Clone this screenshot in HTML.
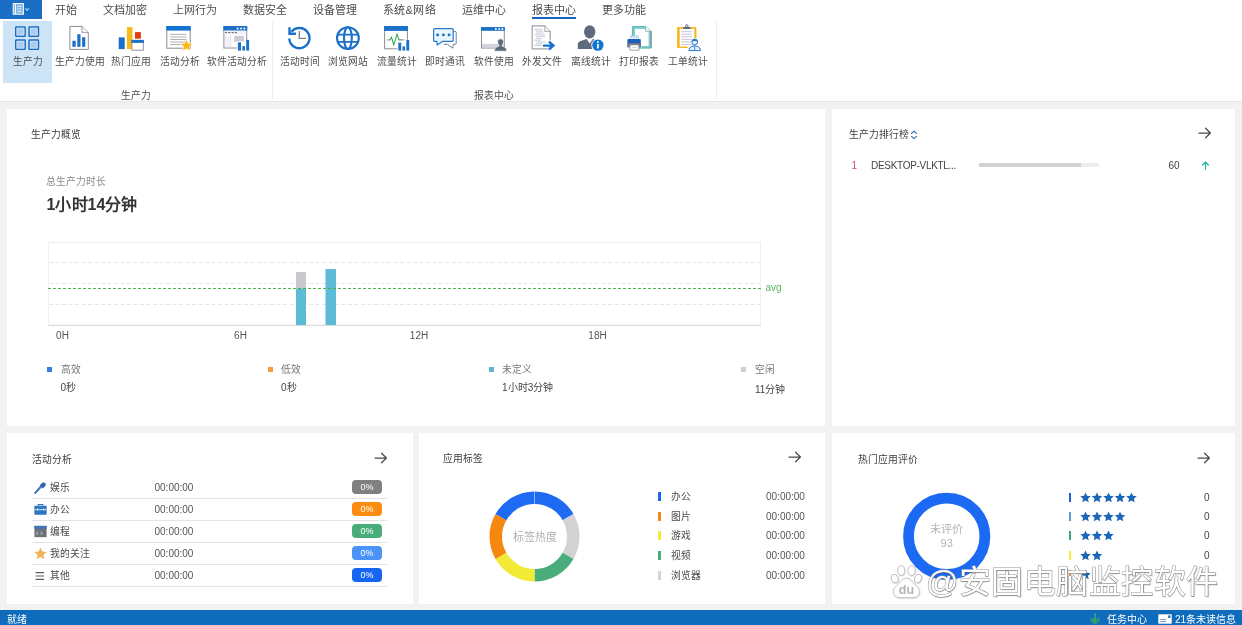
<!DOCTYPE html>
<html lang="zh-CN">
<head>
<meta charset="utf-8">
<title>生产力</title>
<style>
*{box-sizing:border-box;margin:0;padding:0}
html,body{width:1242px;height:625px;overflow:hidden;background:#f2f2f2}
body{position:relative;font-family:"Liberation Sans",sans-serif;font-size:10px;color:#444;line-height:1}
.abs,.abs *{position:absolute}
div,span,svg{position:absolute;white-space:nowrap}
.c{transform:translateX(-50%)}
#app{left:0;top:0;width:1242px;height:625px;background:#f2f2f2;overflow:hidden;will-change:transform}
/* ribbon */
#ribbon{left:0;top:0;width:1242px;height:102px;background:#fff;border-bottom:1px solid #e6e6e6}
#appbtn{left:0;top:0;width:42px;height:19px;background:#1a6fc4}
.menu{top:3.5px;font-size:11px;line-height:12px;color:#4d4d4d;height:12px}
#tabline{left:532px;top:17px;width:44px;height:2px;background:#1565c0}
#sel{left:3px;top:21px;width:49px;height:62px;background:#cde4f6}
.rl{top:56px;font-size:9.75px;line-height:11px;height:11px;color:#4d4d4d;text-align:center;transform:translateX(-50%)}
.gl{top:90px;font-size:9.75px;line-height:11px;height:11px;color:#4d4d4d;transform:translateX(-50%)}
.vsep{top:22px;width:1px;height:77px;background:#ededed}
.ico{top:25px;width:28px;height:28px}
/* panels */
.panel{background:#fff}
.pt{font-size:9.75px;line-height:11px;height:11px;color:#3c3c3c}
.xl{top:330px;font-size:10px;line-height:11px;color:#555}
.sq{width:5px;height:5px}
.lg{top:364px;font-size:9.75px;line-height:11px;color:#777}
.lv{top:382px;font-size:10px;line-height:11px;color:#444}
.an{font-size:9.75px;line-height:11px;color:#4a4a4a}
.at{font-size:10px;line-height:11px;color:#555}
.bd{left:352px;margin-top:-.5px;width:30px;height:14px;border-radius:4px;color:#fff;font-size:9px;line-height:14px;text-align:center}
.hl{left:32px;width:355px;height:1px;background:#e4e4e4}
.tb{left:657.5px;width:3px;height:9px}
.rb{left:1068.7px;width:2.6px;height:9px}
#wm{font-size:32px;line-height:40px;height:40px;letter-spacing:.5px;color:#fff;-webkit-text-stroke:1.1px #9c9c9c;paint-order:stroke fill;text-shadow:.5px .8px 1.2px rgba(0,0,0,.28)}
.j{text-align:justify;text-align-last:justify}
/* status */
#status{left:0;top:610px;width:1242px;height:15px;background:#0f6cbd}
.st{top:4px;font-size:10px;line-height:11px;height:11px;color:#fff}
</style>
</head>
<body>
<div id="app">

<!-- ================= RIBBON ================= -->
<div id="ribbon">
  <div id="appbtn"></div>
  <span class="j menu" style="width:22px;left:55px">开始</span>
  <span class="j menu" style="width:44px;left:103px">文档加密</span>
  <span class="j menu" style="width:44px;left:173px">上网行为</span>
  <span class="j menu" style="width:44px;left:243px">数据安全</span>
  <span class="j menu" style="width:44px;left:313px">设备管理</span>
  <span class="j menu" style="left:382.5px;width:53.5px">系统&amp;网络</span>
  <span class="j menu" style="width:44px;left:462px">运维中心</span>
  <span class="j menu" style="width:44px;left:532px">报表中心</span>
  <span class="j menu" style="width:44px;left:602px">更多功能</span>
  <div id="tabline"></div>
  <div id="sel"></div>

<svg id="icons" style="left:0;top:0" width="730" height="56" viewBox="0 0 730 56">
<g id="i-app"><rect x="13.2" y="3.6" width="10.2" height="10.6" fill="#7db4e6" stroke="#fff" stroke-width="1"/><path d="M15.4 3.6 V14.2" stroke="#fff" stroke-width="1"/><path d="M17.3 6.4 H21.6 M17.3 8.9 H21.6 M17.3 11.4 H21.6" stroke="#fff" stroke-width=".8" opacity=".9"/><path d="M25.2 8.4 L27 10.3 L28.8 8.4" fill="none" stroke="#9ad2ff" stroke-width="1.3"/></g>
<g id="i1"><rect x="15.75" y="26.95" width="9.4" height="9.3" rx=".6" fill="#a9ccf1" stroke="#1b6cc0" stroke-width="1.5"/><rect x="17.0" y="28.2" width="6.9" height="6.8" fill="none" stroke="#cfe4fb" stroke-width=".8"/><rect x="29.049999999999997" y="26.95" width="9.4" height="9.3" rx=".6" fill="#a9ccf1" stroke="#1b6cc0" stroke-width="1.5"/><rect x="30.299999999999997" y="28.2" width="6.9" height="6.8" fill="none" stroke="#cfe4fb" stroke-width=".8"/><rect x="15.75" y="40.05" width="9.4" height="9.3" rx=".6" fill="#a9ccf1" stroke="#1b6cc0" stroke-width="1.5"/><rect x="17.0" y="41.3" width="6.9" height="6.8" fill="none" stroke="#cfe4fb" stroke-width=".8"/><rect x="29.049999999999997" y="40.05" width="9.4" height="9.3" rx=".6" fill="#a9ccf1" stroke="#1b6cc0" stroke-width="1.5"/><rect x="30.299999999999997" y="41.3" width="6.9" height="6.8" fill="none" stroke="#cfe4fb" stroke-width=".8"/></g>
<g id="i2"><path d="M69.9 26.4 H81.9 L88.3 32.6 V49.4 H69.9 Z" fill="#fff" stroke="#8d8d93" stroke-width="1"/><path d="M81.9 26.4 V32.6 H88.3" fill="#f1f1f4" stroke="#8d8d93" stroke-width=".8"/><rect x="72.4" y="40.8" width="3.3" height="6" fill="#1b70c8"/><rect x="77.3" y="34.2" width="3.2" height="12.6" fill="#1b70c8"/><rect x="82.1" y="37.2" width="3.2" height="9.6" fill="#1b70c8"/></g>
<g id="i3"><rect x="118.7" y="37.4" width="6" height="11.7" fill="#1b70c8"/><rect x="126.9" y="27.1" width="5.6" height="22" fill="#f8b81a"/><rect x="135" y="32.1" width="5.9" height="6.6" fill="#e23d0e"/><rect x="131.9" y="40.4" width="11.4" height="9.8" fill="#fff" stroke="#8d8d93" stroke-width=".9"/><rect x="131.4" y="39.9" width="12.4" height="3" fill="#1b70c8"/></g>
<g id="i4"><rect x="166.8" y="26.5" width="23.4" height="21.7" fill="#fff" stroke="#8d8d93" stroke-width="1"/><rect x="166.3" y="26" width="24.4" height="4.6" fill="#1274d2"/><g stroke="#9b9ba3" stroke-width=".8"><path d="M170.2 34.4 H186.5"/><path d="M170.2 37 H186.5"/><path d="M170.2 39.5 H186.5"/><path d="M170.2 42 H186.5"/><path d="M170.2 44.5 H186.5"/></g><polygon points="186.50,39.20 188.26,43.27 192.68,43.69 189.35,46.63 190.32,50.96 186.50,48.70 182.68,50.96 183.65,46.63 180.32,43.69 184.74,43.27" fill="#fbb815" stroke="#fff" stroke-width=".6"/></g>
<g id="i5"><rect x="223.9" y="26.5" width="22.8" height="21.5" fill="#fff" stroke="#8d8d93" stroke-width="1"/><rect x="223.4" y="26" width="23.8" height="4.7" fill="#1b70c8"/><circle cx="237.6" cy="28.4" r="1" fill="#fff"/><circle cx="241" cy="28.4" r="1" fill="#fff"/><circle cx="244.3" cy="28.4" r="1" fill="#fff"/><rect x="224.4" y="30.7" width="21.8" height="3.6" fill="#f0f0f5"/><rect x="224.9" y="32.1" width="2" height="1" fill="#555a66"/><rect x="228.2" y="32.1" width="2" height="1" fill="#555a66"/><rect x="231.6" y="32.1" width="2" height="1" fill="#555a66"/><rect x="234.9" y="32.1" width="2" height="1" fill="#555a66"/><path d="M224.6 37 H229.6" stroke="#d5d2e6" stroke-width=".7"/><path d="M224.6 39 H229.6" stroke="#d5d2e6" stroke-width=".7"/><path d="M224.6 41 H229.6" stroke="#d5d2e6" stroke-width=".7"/><path d="M224.6 43 H229.6" stroke="#d5d2e6" stroke-width=".7"/><path d="M224.6 45 H229.6" stroke="#d5d2e6" stroke-width=".7"/><path d="M224.6 47 H229.6" stroke="#d5d2e6" stroke-width=".7"/><path d="M230.6 34.3 V47.5" stroke="#cfcfd8" stroke-width=".7"/><rect x="234.3" y="35.9" width="9.7" height="6" fill="#c9cbd8"/><rect x="236.9" y="41.4" width="13.2" height="9.6" fill="#fff"/><rect x="237.9" y="42.4" width="3.1" height="8.2" fill="#1b70c8"/><rect x="242.4" y="46.1" width="2.6" height="4.5" fill="#1b70c8"/><rect x="246.2" y="39.9" width="2.9" height="10.7" fill="#1b70c8"/></g>
<g id="i6" fill="none" stroke="#1b70c8" stroke-width="2.4"><path d="M291.44 31.88 A10.1 10.1 0 1 1 289.31 38.45"/><path d="M289.5 27.2 V33.7 H296" stroke-width="2.4"/><path d="M299.3 30.9 V38.3 H306" stroke="#7f7f85" stroke-width="1.3"/></g>
<g id="i7" fill="none" stroke="#1b70c8" stroke-width="2.1"><circle cx="347.9" cy="38.1" r="10.9"/><ellipse cx="347.9" cy="38.1" rx="3.9" ry="10.9"/><path d="M338.3 34.6 H357.5 M338.3 41.9 H357.5" stroke-width="1.8"/></g>
<g id="i8"><rect x="384.6" y="26.5" width="22.8" height="22.3" fill="#fff" stroke="#8d8d93" stroke-width="1"/><rect x="384.1" y="26" width="23.8" height="4.9" fill="#1b70c8"/><path d="M386.6 39.9 H389.4 M401.6 39.9 H404.6" stroke="#9a9aa0" stroke-width="1" fill="none"/><path d="M389.2 39.9 L390.3 39.9 L391.3 36.9 L392.4 39.9 L393.7 45.1 L395.4 39.9 L397 33.8 L398.9 39.9 L401.8 39.9" fill="none" stroke="#3fa852" stroke-width="1.1" stroke-linejoin="round"/><rect x="397.3" y="41.6" width="12.9" height="9.4" fill="#fff"/><rect x="398.3" y="42.6" width="2.9" height="8" fill="#1b70c8"/><rect x="402.5" y="46.4" width="2.6" height="4.2" fill="#1b70c8"/><rect x="406.3" y="40.1" width="2.9" height="10.5" fill="#1b70c8"/></g>
<g id="i9"><path d="M453.8 31.4 H455.2 Q456.2 31.4 456.2 32.4 V43.3 Q456.2 44.3 455.2 44.3 H453.4 L452.6 48.2 L447.6 44.3 H444" fill="#fff" stroke="#6c809a" stroke-width="1"/><path d="M434.6 28.6 H452.2 Q453.2 28.6 453.2 29.6 V40.4 Q453.2 41.4 452.2 41.4 H442.3 L437.3 45.1 L436.9 41.4 H434.6 Q433.6 41.4 433.6 40.4 V29.6 Q433.6 28.6 434.6 28.6 Z" fill="#eaf4fd" stroke="#2a78ca" stroke-width="1.2" stroke-linejoin="round"/><circle cx="437.6" cy="34.9" r="1.45" fill="#1b70c8"/><circle cx="443.4" cy="34.9" r="1.45" fill="#1b70c8"/><circle cx="449.1" cy="34.9" r="1.45" fill="#1b70c8"/></g>
<g id="i10"><rect x="481.5" y="27.6" width="22.8" height="20.4" fill="#fff" stroke="#8d8d93" stroke-width="1"/><rect x="481" y="27.1" width="23.8" height="3.7" fill="#1b70c8"/><circle cx="495.9" cy="28.9" r="1" fill="#fff"/><circle cx="499.2" cy="28.9" r="1" fill="#fff"/><circle cx="502.3" cy="28.9" r="1" fill="#fff"/><rect x="482" y="43.9" width="21.8" height="3.6" fill="#d3d5dc"/><path d="M494.4 51.2 Q494.2 47.4 497.6 46.6 L498.9 46.2 L498.9 45 Q497.5 43.6 497.5 41.7 Q497.5 38.8 500.6 38.8 Q503.7 38.8 503.7 41.7 Q503.7 43.6 502.3 45 L502.3 46.2 L503.6 46.6 Q507 47.4 506.8 51.2 Z" fill="#5d6a7c" stroke="#fff" stroke-width=".7"/></g>
<g id="i11"><path d="M532.2 25.8 H544.8 L550.2 31.6 V48.9 H532.2 Z" fill="#fff" stroke="#a0a0a7" stroke-width="1.2"/><path d="M544.8 25.8 V31.6 H550.2" fill="#f3f3f6" stroke="#a0a0a7" stroke-width=".9"/><g stroke="#bcc0d0" stroke-width=".8"><path d="M534.2 29.4 H542.5"/><path d="M535.8 31.2 H543.0"/><path d="M535.8 33 H543.4"/><path d="M534.2 34.8 H544.9"/><path d="M535.8 36.6 H545.1"/><path d="M535.8 38.4 H541.4"/><path d="M534.2 40.2 H541.1"/><path d="M535.8 42 H546.4"/><path d="M535.8 43.8 H542.7"/><path d="M534.2 45.4 H542.5"/></g><path d="M542 45.6 H553.8 M548.7 41.3 L553.6 45.6 L548.7 49.9" fill="none" stroke="#fff" stroke-width="4.2"/><path d="M543 45.6 H552.6 M548.9 41.7 L553.4 45.6 L548.9 49.5" fill="none" stroke="#1a70d2" stroke-width="2.4" stroke-linejoin="miter"/></g>
<g id="i12"><path d="M577.8 48.9 V44.6 Q577.8 41.6 581.4 40.7 L586.6 39 L589.7 43.6 L592.8 39 L598 40.7 Q601.4 41.6 601.6 44.6 V48.9 Z" fill="#5e6b7d"/><ellipse cx="589.7" cy="31.8" rx="5.7" ry="6.6" fill="#5e6b7d"/><circle cx="597.9" cy="45.1" r="6.6" fill="#fff"/><circle cx="597.9" cy="45.1" r="5.7" fill="#1274d2"/><rect x="597.1" y="43.9" width="1.7" height="4.6" fill="#fff"/><circle cx="597.95" cy="41.9" r="1" fill="#fff"/></g>
<g id="i13"><path d="M632.4 26.5 H645.6 L651.1 31.2 V48.1 H632.4 Z" fill="#7fcfcb" stroke="#5bb5b3" stroke-width="1"/><path d="M635 28.9 H644.6 L648.6 32.6 V45.9 H635 Z" fill="#fff"/><path d="M645.6 26.5 V31.2 H651.1" fill="#fff" stroke="#8a9aa6" stroke-width=".8"/><path d="M651.1 31.2 V48.1" stroke="#7a8794" stroke-width=".9"/><rect x="630.2" y="35.7" width="8.4" height="4.6" rx=".8" fill="#cfe3f7" stroke="#9abde2" stroke-width=".6"/><rect x="626.6" y="38.4" width="15" height="9.2" rx="1.2" fill="#fff"/><rect x="627.4" y="38.9" width="13.4" height="4.6" rx="1.2" fill="#1b5fba"/><rect x="627.2" y="43" width="13.8" height="4.4" fill="#6c7384"/><rect x="629.9" y="44.9" width="9" height="5.2" fill="#fff" stroke="#8d8d93" stroke-width=".8"/><path d="M631.6 47.6 H637.2" stroke="#c5c5cc" stroke-width=".8"/></g>
<g id="i14"><rect x="677.1" y="27.1" width="19.3" height="20.9" rx=".8" fill="#f6b519"/><rect x="679.7" y="28.6" width="14.6" height="18" fill="#fff"/><path d="M681.3 31.7 H692.2" stroke="#b9bdd0" stroke-width=".9"/><path d="M681.3 34.2 H692.2" stroke="#c9bce0" stroke-width=".9"/><path d="M681.3 36.8 H692.2" stroke="#b9bdd0" stroke-width=".9"/><path d="M681.3 39.4 H692.2" stroke="#c9bce0" stroke-width=".9"/><path d="M681.3 41.9 H692.2" stroke="#b9bdd0" stroke-width=".9"/><path d="M681.3 44.5 H692.2" stroke="#c9bce0" stroke-width=".9"/><circle cx="686.8" cy="26" r="1.3" fill="none" stroke="#5a6577" stroke-width=".9"/><path d="M682.6 28.9 Q682.8 26.9 685 26.9 H688.6 Q690.8 26.9 691 28.9 Z" fill="#5a6577"/><path d="M687.9 51 Q687.7 47.2 691.2 46.2 L694.7 45.4 L698.2 46.2 Q701.5 47.2 701.3 51 Z" fill="#fff" stroke="#fff" stroke-width="2"/><circle cx="694.7" cy="41.9" r="3.9" fill="#fff"/><path d="M688.9 50.6 Q688.8 47.4 691.6 46.6 L694.7 45.8 L697.8 46.6 Q700.6 47.4 700.5 50.6 Z" fill="#eaf3fc" stroke="#2a78d2" stroke-width="1" stroke-linejoin="round"/><path d="M694.7 46.4 V50.4" stroke="#2a78d2" stroke-width=".9"/><circle cx="694.7" cy="42" r="2.9" fill="#eaf3fc" stroke="#2a78d2" stroke-width="1"/><path d="M691.8 41.6 Q691.8 39 694.7 39 Q697.6 39 697.6 41.6 Q694.7 40.4 691.8 41.6 Z" fill="#2a78d2"/></g>
</svg>
  <span class="j rl" style="width:30px;left:27.5px">生产力</span>
  <span class="j rl" style="width:50px;left:79.5px">生产力使用</span>
  <span class="j rl" style="width:40px;left:130.5px">热门应用</span>
  <span class="j rl" style="width:40px;left:179.5px">活动分析</span>
  <span class="j rl" style="width:60px;left:236.5px">软件活动分析</span>
  <span class="j rl" style="width:40px;left:299.5px">活动时间</span>
  <span class="j rl" style="width:40px;left:348px">浏览网站</span>
  <span class="j rl" style="width:40px;left:396.5px">流量统计</span>
  <span class="j rl" style="width:40px;left:445px">即时通讯</span>
  <span class="j rl" style="width:40px;left:493.5px">软件使用</span>
  <span class="j rl" style="width:40px;left:542px">外发文件</span>
  <span class="j rl" style="width:40px;left:590.5px">离线统计</span>
  <span class="j rl" style="width:40px;left:639px">打印报表</span>
  <span class="j rl" style="width:40px;left:687.5px">工单统计</span>

  <span class="j gl" style="width:30px;left:135.5px">生产力</span>
  <span class="j gl" style="width:40px;left:493.5px">报表中心</span>
  <div class="vsep" style="left:272px"></div>
  <div class="vsep" style="left:716px"></div>
</div>

<!-- ================= PANELS ================= -->
<div class="panel" id="p1" style="left:7px;top:109px;width:818px;height:317px"></div>
<span class="j pt" style="width:50px;left:30.5px;top:128.5px">生产力概览</span>
<span class="j" style="width:60px;left:46px;top:175.5px;font-size:9.75px;line-height:11px;color:#8a8a8a">总生产力时长</span>
<span class="j" style="width:91px;left:46.5px;top:195px;font-size:16px;line-height:20px;font-weight:bold;color:#333">1小时14分钟</span>
<svg id="chart" style="left:40px;top:236px" width="750" height="96" viewBox="40 236 750 96">
  <rect x="48.5" y="242.5" width="712" height="82.5" fill="#fff" stroke="#f0f0f0" stroke-width="1"/>
  <g stroke="#e6e6e6" stroke-width="1" stroke-dasharray="4 2.5">
    <line x1="49" y1="262.5" x2="760" y2="262.5"/>
    <line x1="49" y1="283.5" x2="760" y2="283.5"/>
    <line x1="49" y1="304.5" x2="760" y2="304.5"/>
  </g>
  <rect x="296" y="272" width="10" height="16.5" fill="#c9c9cd"/>
  <rect x="296" y="288.5" width="10" height="36.5" fill="#5cbcd6"/>
  <rect x="325.5" y="269" width="10.5" height="56" fill="#5cbcd6"/>
  <line x1="48" y1="325.5" x2="761" y2="325.5" stroke="#dcdcdc" stroke-width="1"/>
  <line x1="48" y1="288.5" x2="761" y2="288.5" stroke="#4cae4c" stroke-width="1" stroke-dasharray="3 2"/>
</svg>
<span style="left:765.5px;top:282px;font-size:10px;line-height:11px;color:#5cb85c">avg</span>
<span class="xl c" style="left:62.5px">0H</span>
<span class="xl c" style="left:240.5px">6H</span>
<span class="xl c" style="left:419px">12H</span>
<span class="xl c" style="left:597.5px">18H</span>
<div class="sq" style="left:47px;top:367px;background:#3d7fe0"></div>
<span class="j lg" style="width:20px;left:60.5px">高效</span>
<span class="j lv" style="width:16px;left:60.5px">0秒</span>
<div class="sq" style="left:267.5px;top:367px;background:#f0a040"></div>
<span class="j lg" style="width:20px;left:281px">低效</span>
<span class="j lv" style="width:16px;left:281px">0秒</span>
<div class="sq" style="left:488.5px;top:367px;background:#62b4d6"></div>
<span class="j lg" style="width:30px;left:502px">未定义</span>
<span class="j lv" style="width:51.5px;left:502px">1小时3分钟</span>
<div class="sq" style="left:741px;top:367px;background:#cfcfcf"></div>
<span class="j lg" style="width:20px;left:755px">空闲</span>
<span class="j lv" style="width:30.5px;left:755px;top:384px">11分钟</span>
<div class="panel" id="p2" style="left:832px;top:109px;width:403px;height:317px"></div>
<span class="j pt" style="width:60px;left:848.5px;top:128.5px">生产力排行榜</span>
<svg style="left:909.5px;top:130px" width="8" height="10" viewBox="0 0 8 10"><path d="M1.5 3.5 L4 1.2 L6.5 3.5 M1.5 6.3 L4 8.6 L6.5 6.3" fill="none" stroke="#2b6cb8" stroke-width="1.1" stroke-linecap="round" stroke-linejoin="round"/></svg>
<svg class="arr" style="left:1198px;top:127px" width="14" height="12" viewBox="0 0 14 12"><path d="M1 6 H12.3 M7.6 1.2 L12.4 6 L7.6 10.8" fill="none" stroke="#4a4a4a" stroke-width="1.25" stroke-linecap="round" stroke-linejoin="round"/></svg>
<span style="left:851.5px;top:160px;font-size:10px;line-height:11px;color:#e0457b">1</span>
<span style="left:871px;top:160px;font-size:10px;line-height:11px;color:#444;letter-spacing:-.3px">DESKTOP-VLKTL...</span>
<div style="left:978.5px;top:162.5px;width:120px;height:4px;background:#ececec"></div>
<div style="left:978.5px;top:162.5px;width:102px;height:4px;background:#d2d2d2"></div>
<span style="left:1168.5px;top:160px;font-size:10px;line-height:11px;color:#444">60</span>
<svg style="left:1201px;top:160.5px" width="9" height="9" viewBox="0 0 9 9"><path d="M4.5 8.3 V1.2 M1.6 4 L4.5 1 L7.4 4" fill="none" stroke="#1fb8a0" stroke-width="1.2" stroke-linecap="round" stroke-linejoin="round"/></svg>
<div class="panel" id="p3" style="left:7px;top:433px;width:406px;height:171px"></div>
<span class="j pt" style="width:40px;left:32px;top:453.5px">活动分析</span>
<svg class="arr" style="left:374px;top:452px" width="14" height="12" viewBox="0 0 14 12"><path d="M1 6 H12.3 M7.6 1.2 L12.4 6 L7.6 10.8" fill="none" stroke="#4a4a4a" stroke-width="1.25" stroke-linecap="round" stroke-linejoin="round"/></svg>
<svg style="left:34px;top:481.5px" width="12" height="12" viewBox="0 0 12 12"><path d="M1.3 10.9 L6.6 5" stroke="#3f74ba" stroke-width="2.1" stroke-linecap="round"/><path d="M5.6 3.4 L8.2 0.8 Q9.9 -0.1 11.2 1.1 Q12.3 2.5 11.3 4 L8.8 6.5 Z" fill="#2c64b2"/></svg>
<span class="j an" style="width:20px;left:50px;top:482.0px">娱乐</span>
<span class="at" style="left:154.5px;top:482.0px">00:00:00</span>
<div class="bd" style="top:480.5px;background:#808080">0%</div>
<div class="hl" style="top:498.0px"></div>
<svg style="left:33.5px;top:503px" width="13" height="13" viewBox="0 0 12 12"><path d="M4 2.6 V1.4 H8 V2.6" fill="none" stroke="#2f6fb6" stroke-width="1.1"/><rect x="0.3" y="2.6" width="11.4" height="8.2" rx="0.8" fill="#2f76c2"/><rect x="0.3" y="5.6" width="11.4" height="1" fill="#cfe2f5"/><rect x="2.2" y="5" width="2" height="2.2" fill="#fff" stroke="#2f76c2" stroke-width=".5"/><rect x="7.8" y="5" width="2" height="2.2" fill="#fff" stroke="#2f76c2" stroke-width=".5"/></svg>
<span class="j an" style="width:20px;left:50px;top:504.0px">办公</span>
<span class="at" style="left:154.5px;top:504.0px">00:00:00</span>
<div class="bd" style="top:502.5px;background:#fd8c10">0%</div>
<div class="hl" style="top:520.0px"></div>
<svg style="left:33.5px;top:525px" width="13" height="13" viewBox="0 0 12 12"><rect x="0.4" y="0.8" width="11.2" height="10.4" fill="#6d7076"/><rect x="0.4" y="0.8" width="11.2" height="2.6" fill="#3f77bd"/><path d="M3.6 6 L2.2 7.6 L3.6 9.2 M6.2 6 L7.6 7.6 L6.2 9.2" stroke="#d8d8d8" stroke-width=".8" fill="none"/></svg>
<span class="j an" style="width:20px;left:50px;top:526.0px">编程</span>
<span class="at" style="left:154.5px;top:526.0px">00:00:00</span>
<div class="bd" style="top:524.5px;background:#48ad7b">0%</div>
<div class="hl" style="top:542.0px"></div>
<svg style="left:33.5px;top:547px" width="13" height="13" viewBox="0 0 12 12"><path d="M6 0.5 L7.7 4.1 L11.6 4.6 L8.7 7.3 L9.5 11.2 L6 9.3 L2.5 11.2 L3.3 7.3 L0.4 4.6 L4.3 4.1 Z" fill="#f1b35a"/></svg>
<span class="j an" style="width:40px;left:50px;top:548.0px">我的关注</span>
<span class="at" style="left:154.5px;top:548.0px">00:00:00</span>
<div class="bd" style="top:546.5px;background:#4b93f6">0%</div>
<div class="hl" style="top:564.0px"></div>
<svg style="left:34px;top:569.5px" width="12" height="12" viewBox="0 0 12 12"><path d="M1.6 2.7 H10.2 M1.6 6 H10.2 M1.6 9.3 H10.2" stroke="#5f5f5f" stroke-width="1.2"/></svg>
<span class="j an" style="width:20px;left:50px;top:570.0px">其他</span>
<span class="at" style="left:154.5px;top:570.0px">00:00:00</span>
<div class="bd" style="top:568.5px;background:#1766f3">0%</div>
<div class="hl" style="top:586.0px"></div>
<div class="panel" id="p4" style="left:419px;top:433px;width:406px;height:171px"></div>
<span class="j pt" style="width:40px;left:443px;top:452.5px">应用标签</span>
<svg class="arr" style="left:787.5px;top:450.5px" width="14" height="12" viewBox="0 0 14 12"><path d="M1 6 H12.3 M7.6 1.2 L12.4 6 L7.6 10.8" fill="none" stroke="#4a4a4a" stroke-width="1.25" stroke-linecap="round" stroke-linejoin="round"/></svg>
<svg style="left:484px;top:486px" width="101" height="101" viewBox="484 486 101 101">
  <path d="M534.50 491.50 A45 45 0 0 1 573.47 514.00 L562.65 520.25 A32.5 32.5 0 0 0 534.50 504.00 Z" fill="#1e6af2"/>
  <path d="M573.47 514.00 A45 45 0 0 1 573.47 559.00 L562.65 552.75 A32.5 32.5 0 0 0 562.65 520.25 Z" fill="#d2d2d2"/>
  <path d="M573.47 559.00 A45 45 0 0 1 534.50 581.50 L534.50 569.00 A32.5 32.5 0 0 0 562.65 552.75 Z" fill="#48ad7b"/>
  <path d="M534.50 581.50 A45 45 0 0 1 495.53 559.00 L506.35 552.75 A32.5 32.5 0 0 0 534.50 569.00 Z" fill="#f3ea35"/>
  <path d="M495.53 559.00 A45 45 0 0 1 495.53 514.00 L506.35 520.25 A32.5 32.5 0 0 0 506.35 552.75 Z" fill="#f6880f"/>
  <path d="M495.53 514.00 A45 45 0 0 1 534.50 491.50 L534.50 504.00 A32.5 32.5 0 0 0 506.35 520.25 Z" fill="#1e6af2"/>
  <line x1="534.5" y1="491.5" x2="534.5" y2="504.0" stroke="#ffffff" stroke-opacity=".55" stroke-width=".6"/>
</svg>
<span class="j c" style="width:44px;left:534.5px;top:530.5px;font-size:11px;line-height:12px;color:#b0b0b0">标签热度</span>
<div class="tb" style="top:492.0px;background:#1f64e6"></div>
<span class="j an" style="width:20px;left:670.5px;top:491.0px">办公</span>
<span class="at" style="left:766px;top:491.0px">00:00:00</span>
<div class="tb" style="top:511.5px;background:#f6880f"></div>
<span class="j an" style="width:20px;left:670.5px;top:510.5px">图片</span>
<span class="at" style="left:766px;top:510.5px">00:00:00</span>
<div class="tb" style="top:531.0px;background:#f3ea35"></div>
<span class="j an" style="width:20px;left:670.5px;top:530.0px">游戏</span>
<span class="at" style="left:766px;top:530.0px">00:00:00</span>
<div class="tb" style="top:550.5px;background:#48ad7b"></div>
<span class="j an" style="width:20px;left:670.5px;top:549.5px">视频</span>
<span class="at" style="left:766px;top:549.5px">00:00:00</span>
<div class="tb" style="top:571.0px;background:#d4d4d4"></div>
<span class="j an" style="width:30px;left:670.5px;top:570.0px">浏览器</span>
<span class="at" style="left:766px;top:570.0px">00:00:00</span>
<div class="panel" id="p5" style="left:832px;top:433px;width:403px;height:171px"></div>

<span class="j pt" style="width:60px;left:857.5px;top:453.5px">热门应用评价</span>
<svg class="arr" style="left:1197px;top:452px" width="14" height="12" viewBox="0 0 14 12"><path d="M1 6 H12.3 M7.6 1.2 L12.4 6 L7.6 10.8" fill="none" stroke="#4a4a4a" stroke-width="1.25" stroke-linecap="round" stroke-linejoin="round"/></svg>
<svg style="left:896px;top:486px" width="101" height="101" viewBox="896 486 101 101"><circle cx="946.7" cy="536.3" r="38.2" fill="none" stroke="#1c6af4" stroke-width="10.8"/></svg>
<span class="j c" style="width:33px;left:946.7px;top:523px;font-size:11px;line-height:12px;color:#b4b4b4">未评价</span>
<span class="c" style="left:946.7px;top:536.5px;font-size:11px;line-height:12px;color:#b4b4b4">93</span>
<div class="rb" style="top:492.5px;background:#2160cf"></div>
<svg style="left:1079.5px;top:491.5px" width="58.5" height="11" viewBox="0 0 58.5 11" fill="#1b66b6"><polygon points="5.50,0.40 7.00,3.84 10.73,4.20 7.93,6.69 8.73,10.35 5.50,8.45 2.27,10.35 3.07,6.69 0.27,4.20 4.00,3.84"/><polygon points="17.00,0.40 18.50,3.84 22.23,4.20 19.43,6.69 20.23,10.35 17.00,8.45 13.77,10.35 14.57,6.69 11.77,4.20 15.50,3.84"/><polygon points="28.50,0.40 30.00,3.84 33.73,4.20 30.93,6.69 31.73,10.35 28.50,8.45 25.27,10.35 26.07,6.69 23.27,4.20 27.00,3.84"/><polygon points="40.00,0.40 41.50,3.84 45.23,4.20 42.43,6.69 43.23,10.35 40.00,8.45 36.77,10.35 37.57,6.69 34.77,4.20 38.50,3.84"/><polygon points="51.50,0.40 53.00,3.84 56.73,4.20 53.93,6.69 54.73,10.35 51.50,8.45 48.27,10.35 49.07,6.69 46.27,4.20 50.00,3.84"/></svg>
<span class="at" style="left:1204px;top:491.5px;color:#444">0</span>
<div class="rb" style="top:511.79999999999995px;background:#5b9ad8"></div>
<svg style="left:1079.5px;top:510.79999999999995px" width="47.0" height="11" viewBox="0 0 47.0 11" fill="#1b66b6"><polygon points="5.50,0.40 7.00,3.84 10.73,4.20 7.93,6.69 8.73,10.35 5.50,8.45 2.27,10.35 3.07,6.69 0.27,4.20 4.00,3.84"/><polygon points="17.00,0.40 18.50,3.84 22.23,4.20 19.43,6.69 20.23,10.35 17.00,8.45 13.77,10.35 14.57,6.69 11.77,4.20 15.50,3.84"/><polygon points="28.50,0.40 30.00,3.84 33.73,4.20 30.93,6.69 31.73,10.35 28.50,8.45 25.27,10.35 26.07,6.69 23.27,4.20 27.00,3.84"/><polygon points="40.00,0.40 41.50,3.84 45.23,4.20 42.43,6.69 43.23,10.35 40.00,8.45 36.77,10.35 37.57,6.69 34.77,4.20 38.50,3.84"/></svg>
<span class="at" style="left:1204px;top:510.79999999999995px;color:#444">0</span>
<div class="rb" style="top:531.2px;background:#3aa677"></div>
<svg style="left:1079.5px;top:530.2px" width="35.5" height="11" viewBox="0 0 35.5 11" fill="#1b66b6"><polygon points="5.50,0.40 7.00,3.84 10.73,4.20 7.93,6.69 8.73,10.35 5.50,8.45 2.27,10.35 3.07,6.69 0.27,4.20 4.00,3.84"/><polygon points="17.00,0.40 18.50,3.84 22.23,4.20 19.43,6.69 20.23,10.35 17.00,8.45 13.77,10.35 14.57,6.69 11.77,4.20 15.50,3.84"/><polygon points="28.50,0.40 30.00,3.84 33.73,4.20 30.93,6.69 31.73,10.35 28.50,8.45 25.27,10.35 26.07,6.69 23.27,4.20 27.00,3.84"/></svg>
<span class="at" style="left:1204px;top:530.2px;color:#444">0</span>
<div class="rb" style="top:550.7px;background:#f5e83e"></div>
<svg style="left:1079.5px;top:549.7px" width="24.0" height="11" viewBox="0 0 24.0 11" fill="#1b66b6"><polygon points="5.50,0.40 7.00,3.84 10.73,4.20 7.93,6.69 8.73,10.35 5.50,8.45 2.27,10.35 3.07,6.69 0.27,4.20 4.00,3.84"/><polygon points="17.00,0.40 18.50,3.84 22.23,4.20 19.43,6.69 20.23,10.35 17.00,8.45 13.77,10.35 14.57,6.69 11.77,4.20 15.50,3.84"/></svg>
<span class="at" style="left:1204px;top:549.7px;color:#444">0</span>
<div class="rb" style="top:570.0px;background:#f2a336"></div>
<svg style="left:1079.5px;top:569.0px" width="12.5" height="11" viewBox="0 0 12.5 11" fill="#1b66b6"><polygon points="5.50,0.40 7.00,3.84 10.73,4.20 7.93,6.69 8.73,10.35 5.50,8.45 2.27,10.35 3.07,6.69 0.27,4.20 4.00,3.84"/></svg>
<!-- watermark -->
<svg id="paw" style="left:890px;top:564px" width="34" height="37" viewBox="0 0 34 37">
  <g fill="#fff" stroke="#a9a9a9" stroke-width=".7" filter="url(#wsh)">
    <ellipse cx="11.2" cy="6.6" rx="3.7" ry="4.9"/>
    <ellipse cx="21.6" cy="6.6" rx="3.7" ry="4.9"/>
    <ellipse cx="4.8" cy="14.6" rx="3.3" ry="4.4" transform="rotate(-18 4.8 14.6)"/>
    <ellipse cx="28" cy="14.6" rx="3.3" ry="4.4" transform="rotate(18 28 14.6)"/>
    <path d="M16.4 14.2 C20.6 14.2 22.2 18.2 25.2 20.8 C28.6 23.6 30.2 26.2 29.2 29.6 C28 33.6 23.6 34.2 16.4 33.6 C9.2 34.2 4.8 33.6 3.6 29.6 C2.6 26.2 4.2 23.6 7.6 20.8 C10.6 18.2 12.2 14.2 16.4 14.2 Z"/>
  </g>
  <defs><filter id="wsh" x="-20%" y="-20%" width="140%" height="140%"><feDropShadow dx=".4" dy=".6" stdDeviation=".6" flood-color="#000" flood-opacity=".22"/></filter></defs>
  <text x="16.4" y="30" text-anchor="middle" font-family="Liberation Sans, sans-serif" font-weight="bold" font-size="12.5" fill="#b5b5b5" style="position:static">du</text>
</svg>
<span class="j" id="wm" style="left:926px;top:562px;width:292px">@安固电脑监控软件</span>
<!-- ================= STATUS BAR ================= -->
<div id="status">
  <svg style="left:1089px;top:2px" width="12" height="13" viewBox="0 0 12 13"><path d="M6 1 V9.5 M2 6 L6 10.2 L10 6" fill="none" stroke="#3faa5c" stroke-width="1.6"/><path d="M1 8.5 L6 12 L11 8.5" fill="none" stroke="#3faa5c" stroke-width="1.1" opacity=".75"/></svg>
  <svg style="left:1158px;top:3.5px" width="14" height="10" viewBox="0 0 14 10"><rect x="0.3" y="0.3" width="13.4" height="9.4" fill="#fff"/><path d="M2.2 5.6 H8.2 M2.2 7.6 H8.2" stroke="#5a7fa8" stroke-width=".8"/><rect x="10.2" y="1.4" width="2.2" height="2.6" fill="#0f6cbd"/></svg>
  <span class="j st" style="width:20px;left:7px">就绪</span>
  <span class="j st" style="width:40px;left:1107px">任务中心</span>
  <span class="j st" style="width:61.5px;left:1175px">21条未读信息</span>
</div>

</div>
</body>
</html>
